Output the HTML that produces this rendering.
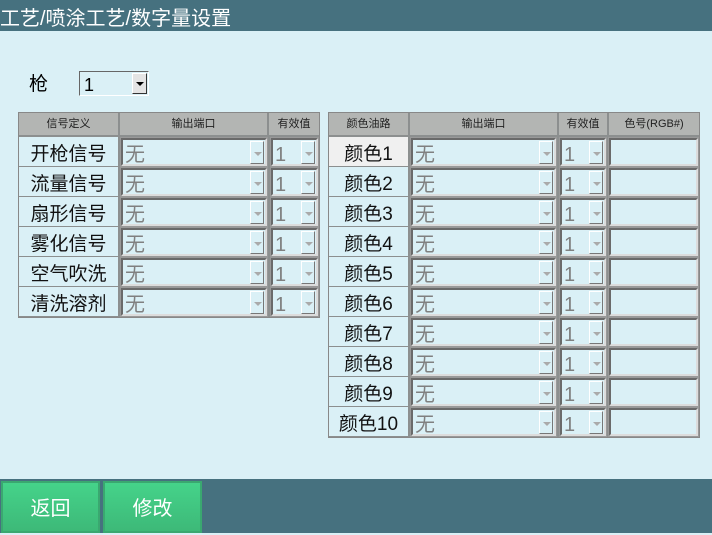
<!DOCTYPE html>
<html><head><meta charset="utf-8"><style>
*{margin:0;padding:0;box-sizing:border-box}
body{width:712px;height:533px;background:#daf0f6;position:relative;overflow:hidden;font-family:"Liberation Sans","Noto Sans CJK SC",sans-serif}
.a{position:absolute}
.hdr{left:0;top:0;width:712px;height:31px;background:#46717f;color:#fff;font-size:20px;line-height:38px;padding-left:0}
.foot{left:0;top:479px;width:712px;height:54px;background:#46717f}
.btn{top:481px;width:99px;height:52px;background:linear-gradient(#45d38a,#3db978);border:2px solid #3aa870;color:#fff;font-size:20px;text-align:center;line-height:52px}
.th{background:#b3b5b3;font-size:11px;text-align:center;line-height:22px;color:#222;height:22px;top:113px}
.lab{background:#daf0f6;font-size:19px;text-align:center;color:#111;line-height:35px;height:29px}
.cb{border:2px solid;border-color:#6a6a6a #dcdcdc #dcdcdc #6a6a6a;outline:1px solid #999;height:28px;color:#808080;font-size:20px;line-height:31px;padding-left:2px;background:#daf0f6}
.dd{position:absolute;right:1px;top:1px;width:14px;height:23px;border:1px solid;border-color:#fff #777 #777 #fff}
.dd:after{content:"";position:absolute;left:3px;top:10px;border-left:4px solid transparent;border-right:4px solid transparent;border-top:4px solid #aaa}
.tb{border:1px solid #888;background:#8c8f8f}
</style></head><body>
<div class="a hdr">工艺/喷涂工艺/数字量设置</div>
<div class="a" style="left:29px;top:73px;font-size:19px;line-height:24px">枪</div>
<div class="a" style="left:79px;top:71px;width:70px;height:25px;border:1px solid;border-color:#666 #fff #fff #666;background:#daf0f6;font-size:18px;line-height:27px;padding-left:4px">1<div style="position:absolute;right:1px;top:1px;width:15px;height:21px;background:#e4e4e4;border:1px solid;border-color:#fff #333 #333 #fff"><div style="position:absolute;left:3px;top:8px;border-left:4px solid transparent;border-right:4px solid transparent;border-top:4px solid #000"></div></div></div>

<div class="a tb" style="left:18px;top:112px;width:302px;height:206px"></div>
<div class="a th" style="left:19px;width:99px">信号定义</div>
<div class="a th" style="left:120px;width:147px">输出端口</div>
<div class="a th" style="left:269px;width:50px">有效值</div>

<div class="a tb" style="left:328px;top:112px;width:372px;height:326px"></div>
<div class="a th" style="left:329px;width:79px">颜色油路</div>
<div class="a th" style="left:410px;width:147px">输出端口</div>
<div class="a th" style="left:559px;width:48px">有效值</div>
<div class="a th" style="left:609px;width:90px">色号(RGB#)</div>

<div id="rows"></div>
<script>
var L=["开枪信号","流量信号","扇形信号","雾化信号","空气吹洗","清洗溶剂"],h="";
L.forEach(function(t,i){var y=137+i*30;
h+='<div class="a lab" style="left:19px;top:'+y+'px;width:99px">'+t+'</div>'+
'<div class="a cb" style="left:121px;top:'+(y+1)+'px;width:146px">无<div class="dd"></div></div>'+
'<div class="a cb" style="left:271px;top:'+(y+1)+'px;width:47px">1<div class="dd"></div></div>';});
for(var i=0;i<10;i++){var y=137+i*30;
h+='<div class="a lab" style="left:329px;top:'+y+'px;width:79px;'+(i==0?'background:#f0f0f0':'')+'">颜色'+(i+1)+'</div>'+
'<div class="a cb" style="left:411px;top:'+(y+1)+'px;width:145px">无<div class="dd"></div></div>'+
'<div class="a cb" style="left:560px;top:'+(y+1)+'px;width:46px">1<div class="dd"></div></div>'+
'<div class="a cb" style="left:609px;top:'+(y+1)+'px;width:89px"></div>';}
document.getElementById("rows").innerHTML=h;
</script>
<div class="a foot"></div>
<div class="a btn" style="left:1px">返回</div>
<div class="a btn" style="left:103px">修改</div>
</body></html>
